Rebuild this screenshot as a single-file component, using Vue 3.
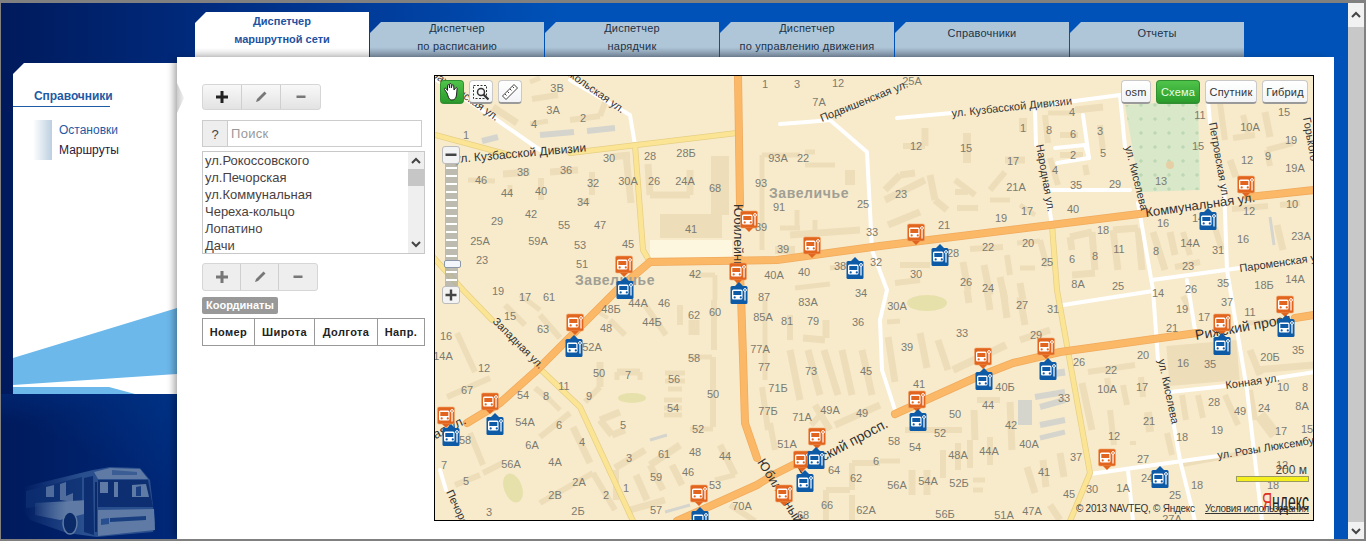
<script setup>
const tabs = [
  { lines: ['Диспетчер', 'маршрутной сети'], active: true },
  { lines: ['Диспетчер', 'по расписанию'] },
  { lines: ['Диспетчер', 'нарядчик'] },
  { lines: ['Диспетчер', 'по управлению движения'] },
  { lines: ['Справочники'] },
  { lines: ['Отчеты'] }
]

const routes = ['ул.Рокоссовского', 'ул.Печорская', 'ул.Коммунальная', 'Череха-кольцо', 'Лопатино', 'Дачи']
const columns = ['Номер', 'Широта', 'Долгота', 'Напр.']
const mapTypes = ['osm', 'Схема', 'Спутник', 'Гибрид']
const sliderDashes = 15

// coordinates below are screen pixels, the svg viewBox starts at the map corner
// roads stop where a street name is written over them, same as on the tiles
const roads = {
  white: [
    '437,80 497,120 540,150', '570,80 630,115 635,145', '780,124 807,122 830,120 867,152 872,250 887,290 880,320 882,370 895,410',
    '897,118 952,113', '1052,104 1120,95', '1120,95 1125,147', '1138,203 1153,290 1158,360', '1172,415 1180,460 1195,521',
    '1208,100 1210,123', '1224,185 1227,270 1247,390 1262,521',
    '1035,110 1036,145', '1048,200 1052,225', '1048,190 1130,190', '1055,148 1085,145 1089,158 1057,163', '1083,115 1089,158',
    '1152,280 1240,268', '1063,305 1153,291', '1170,392 1226,386', '1270,379 1314,372', '1090,474 1218,456',
    '1187,280 1195,330', '1128,470 1133,521', '440,470 446,490'
  ],
  yellow: [
    '435,135 510,155', '570,153 737,133', '635,145 643,250 650,262',
    '434,258 463,290 492,320', '537,366 580,407 633,521', '1052,225 1057,290 1090,473 1070,521'
  ],
  orange: [
    '738,75 740,205', '739,258 741,295 743,357 745,423 757,458',
    '650,262 777,260 880,246 1147,213', '1248,197 1314,190',
    '650,262 617,290 537,370 500,403 467,423',
    '677,521 757,485 773,475 803,460', '895,414 977,377 1013,363 1060,352 1197,333', '1295,318 1314,315'
  ]
}

const strips = `532 99 558 95 6|570 120 600 116 6|600 116 606 100 6|530 124 548 121 5|493 107 517 123 7|530 82 540 78 5
503 174 530 172 7|550 172 578 170 7|468 180 495 181 5|510 185 510 195 5|541 178 541 200 6|592 172 592 195 6|578 202 590 201 6
610 157 630 155 7|626 155 631 203 7|648 164 650 195 7|650 195 690 195 7|690 195 690 170 7|720 156 720 215 18|660 226 722 226 24
762 155 762 250 5|762 155 800 155 5|805 152 815 152 5|805 165 835 165 5|850 170 850 185 10|780 228 800 228 5|797 210 797 228 5
775 250 795 250 8|790 235 860 230 7|815 220 815 232 5|690 275 715 275 5|715 275 715 300 5|795 288 830 284 5|830 268 848 266 5
645 305 666 335 6|680 305 680 325 6|694 320 694 335 11|714 300 714 350 6|610 320 625 335 6|598 312 608 318 4|600 362 600 387 7
600 387 585 402 6|617 372 640 372 7|617 372 617 380 5|640 372 640 380 5|665 373 685 373 5|665 381 685 381 5|668 389 682 389 5
664 400 682 400 5|664 408 682 408 5|664 415 682 415 5|688 357 712 357 5|713 357 713 427 6|690 429 713 429 5|600 420 620 412 7
600 420 612 435 7|612 435 625 430 7|535 388 550 400 6|550 400 560 410 5|447 397 490 378 6|457 333 475 372 6|540 315 560 338 6
505 305 525 325 6|520 295 540 310 5|540 437 570 413 6|470 433 483 465 6|483 473 503 463 6|455 485 480 475 6|573 427 590 463 7
540 503 593 473 6|593 473 615 510 6|615 468 645 450 7|616 470 616 500 6|650 465 680 445 7|650 465 663 490 7|672 465 682 485 7
636 475 647 500 7|720 445 735 475 7|735 475 715 480 5|730 505 755 521 6|630 510 665 500 7|765 300 765 380 5|762 387 768 430 6
770 423 775 450 6|790 315 790 340 6|803 338 825 340 7|826 320 826 338 7|790 350 800 400 7|808 350 820 395 7|824 350 838 395 7
842 350 852 395 7|862 350 872 395 7|811 425 825 410 6|815 405 830 430 7|835 425 880 405 7|852 463 880 463 6|852 463 852 490 6
826 490 850 490 6|826 490 826 521 6|852 495 852 521 6|888 337 895 382 7|920 333 927 368 7|938 340 948 370 7|953 370 1006 345 8
1020 340 1050 330 7|967 290 969 303 7|987 290 990 310 7|1003 290 1007 318 7|1020 297 1025 325 7|887 322 900 321 5|977 400 1000 400 6
974 410 975 440 7|1010 402 1012 450 7|905 430 962 430 6|880 461 900 461 5|943 450 943 478 6|958 443 958 470 6|970 440 970 468 6
990 437 990 465 6|912 470 912 495 7|927 470 927 495 7|973 480 985 480 5|973 490 983 490 5|1027 467 1035 493 7|1043 460 1046 487 7
1060 453 1064 477 7|1050 505 1060 520 7|1082 383 1092 430 7|1088 372 1135 365 6|1107 378 1110 393 6|1123 385 1127 405 6
1110 410 1114 445 6|1130 443 1136 443 4|1148 412 1150 432 8|1141 377 1143 397 6|1167 433 1172 455 6|1168 366 1238 360 40
1182 395 1186 420 6|1198 395 1203 418 6|1225 395 1238 425 6|1250 390 1255 420 6|1180 465 1260 450 5|1260 415 1275 435 12
1250 350 1260 375 7|1255 370 1314 365 7|1247 323 1295 320 5|1183 296 1190 310 6|903 146 925 146 6|925 146 925 128 7|967 133 967 163 8
885 190 900 175 7|900 175 915 173 7|885 200 925 180 7|888 225 920 212 7|930 175 935 200 7|935 200 947 210 7|955 180 975 195 6
955 192 968 192 6|957 208 978 208 6|990 190 1005 172 6|990 200 1010 200 5|1005 160 1025 160 7|1023 118 1023 132 8|1045 115 1048 143 6
1050 158 1058 185 6|1048 113 1075 113 5|1075 110 1103 107 7|1060 135 1078 135 6|1100 125 1103 150 6|1085 165 1087 175 6
1060 155 1083 155 6|1020 205 1035 215 5|900 265 930 265 6|895 283 920 280 6|963 262 968 290 7|984 265 990 295 7|1007 255 1010 275 6
1020 268 1035 268 5|1000 277 1005 300 7|1020 283 1023 300 7|970 249 1003 247 6|1017 243 1040 241 5|1040 240 1047 267 6
1070 237 1092 232 7|1070 237 1072 250 7|1092 232 1095 270 7|1072 275 1095 273 7|1113 230 1138 228 7|1113 230 1118 270 7
1138 228 1142 270 7|1153 232 1165 270 7|1170 232 1175 255 7|1183 232 1190 255 6|1215 228 1222 250 6|1175 267 1200 262 6
1277 225 1283 250 7|1232 209 1268 206 6|1280 205 1300 203 6|1220 103 1225 140 6|1243 115 1248 133 6|1233 138 1255 135 6
1265 112 1270 137 7|1267 150 1293 143 6|1267 150 1270 166 6|1230 160 1236 177 7`

const grayStrips = `540 135 574 132 6|587 131 615 128 6|482 141 498 137 6|1025 400 1025 425 14|1035 397 1065 392 6|1040 407 1065 400 6
1040 425 1065 420 6|1040 438 1065 432 5|1045 375 1065 372 7|650 440 667 435 3|665 512 690 505 3|1270 217 1274 245 3`

const numbers = `557 88 3В|553 110 3А|583 118 2|534 124 4|466 135 1|523 172 38|566 170 36|481 180 46|507 193 44|541 191 40|593 183 32|583 202 34
609 158 30|650 156 28|686 153 28Б|628 181 30А|654 181 26|685 181 24А|715 188 68|778 158 93А|803 158 22|761 183 93|779 207 91|863 204 25
761 227 89|872 232 33|783 249 39|691 229 41|531 214 42|497 221 29|564 225 55|600 225 47|480 241 25А|538 241 59А|580 245 53|628 244 45
582 264 51|482 260 23|498 291 19|525 297 17|549 297 61|765 84 1|797 84 3|838 83 12|819 102 7А|695 274 42|774 275 40А|804 272 40
840 266 38|876 262 32|861 293 34|764 297 87|808 302 83А|510 316 15|543 329 63|446 336 16|443 356 14А|638 303 44А|664 303 46|694 315 62
715 312 60|763 317 85А|787 321 81|813 321 79|858 322 36|611 309 48Б|606 328 48|652 322 44Б|592 347 52А|760 349 77А|764 367 77|811 371 73
866 371 45|694 358 58|484 368 12|599 373 50|628 375 7|674 379 56|564 386 11|589 396 9|713 394 50|467 390 67|523 395 54|546 396 8
673 408 54|778 388 71Б|768 411 77Б|802 417 71А|830 410 49А|862 413 49|525 422 54А|559 425 6|623 425 5|698 429 52|465 440 58|532 445 6А
582 442 4|787 444 51А|664 454 61|695 452 48|725 456 44|629 458 3|511 464 56А|555 462 4А|444 465 7|656 477 59|688 472 46|834 470 64
856 478 62|466 481 5|579 482 2А|715 485 53|626 488 1|555 495 2В|606 495 2|489 512 3|578 511 2Б|656 510 57|742 506 70А|827 505 66
866 510 62А|803 515 68|876 461 6|912 81 25А|916 146 12|966 148 15|1013 161 17|1023 128 1|1072 112 4|1049 130 8|1073 134 6|1100 131 3
1073 155 2|1103 153 5|1055 170 4|1076 185 35|1115 184 29|1016 187 21А|901 194 23|1027 211 17|1073 209 40|1001 218 19|944 225 21
1028 243 20|988 247 22|1103 230 18|1163 223 16|1198 218 14|1249 211 12|1292 204 10|1161 181 13|1200 115 11|1198 146 15|1250 127 10А
1284 112 15|1291 140 19|1247 160 12|1268 156 9|1295 168 19А|1190 243 14А|1243 239 16|1301 236 23А|1156 251 8|1218 250 31|1119 249 11
1095 256 8|1072 259 6|1047 262 25|953 253 28|916 274 30|966 282 26|988 288 24|1078 284 8А|1118 286 25|1188 266 23|1158 293 14
1191 289 26|1223 283 35|1264 285 18Б|1295 279 14А|897 306 30А|1022 305 27|1053 309 31|1182 309 19|1204 317 17|1227 302 37|1250 312 11
1172 328 21|962 333 33|1036 335 29|907 347 39|1143 355 20|1183 363 16|1210 364 35|1079 362 26|1111 370 22|1270 357 20Б|1298 350 35
919 384 41|1005 387 40Б|1107 389 10А|1142 387 17|1064 398 33|1283 387 10|1305 387 8|988 405 44|1214 402 28|1240 411 49|1264 408 24
1302 406 8А|955 414 50|1149 421 21|1011 425 42|940 433 52|1217 430 19|1281 431 17|1307 429 15|1114 436 12|1182 437 18|894 441 58
915 447 54|1029 444 40А|989 451 44А|958 455 48А|1076 457 37|1143 459 27|1044 472 41|1282 465 12|1147 478 24|1092 489 30|1123 488 1А
1197 485 18|1273 485 18|897 485 56А|928 481 54А|959 483 52Б|1069 494 45|1175 495 25|945 514 56Б|1004 515 51А|1032 511 47А|1172 519 27А`

const streets = [
  { x: 455, y: 163, angle: -5, text: 'ул. Кузбасской Дивизии', size: 12 },
  { x: 734, y: 204, angle: 90, text: 'Юбилейный', size: 13 },
  { x: 757, y: 462, angle: 58, text: 'Юбилейный', size: 13 },
  { x: 1146, y: 217, angle: -8, text: 'Коммунальная ул.', size: 13 },
  { x: 1196, y: 340, angle: -10, text: 'Рижский просп.', size: 14 },
  { x: 800, y: 474, angle: -28, text: 'Рижский просп.', size: 14 },
  { x: 492, y: 322, angle: 45, text: 'Западная ул.', size: 11 },
  { x: 822, y: 122, angle: -22, text: 'Подвишенская ул.', size: 11 },
  { x: 558, y: 69, angle: 35, text: 'Никольская ул.', size: 11 },
  { x: 427, y: 73, angle: 35, text: 'Гражданская ул.', size: 11 },
  { x: 952, y: 117, angle: -6, text: 'ул. Кузбасской Дивизии', size: 11 },
  { x: 1036, y: 145, angle: 80, text: 'Народная ул.', size: 11 },
  { x: 1125, y: 147, angle: 76, text: 'ул. Киселева', size: 11 },
  { x: 1209, y: 123, angle: 80, text: 'Петровская ул.', size: 11 },
  { x: 1303, y: 118, angle: 80, text: 'Горького', size: 11 },
  { x: 1240, y: 272, angle: -8, text: 'Пароменская ул.', size: 11 },
  { x: 1158, y: 360, angle: 78, text: 'ул. Киселева', size: 11 },
  { x: 1226, y: 389, angle: -8, text: 'Конная ул.', size: 11 },
  { x: 1218, y: 459, angle: -9, text: 'ул. Розы Люксембург', size: 11 },
  { x: 446, y: 492, angle: 65, text: 'Печорская', size: 11 },
  { x: 375, y: 470, angle: -27, text: 'Рокоссовская ул.', size: 13 }
]

const orangePins = [
  [749, 220], [812, 246], [916, 233], [624, 265], [738, 272], [575, 323], [490, 402], [446, 416], [983, 357], [1046, 347],
  [917, 400], [817, 437], [802, 460], [784, 494], [699, 494], [1107, 458], [1246, 185], [1222, 323], [1285, 305]
]
const bluePins = [
  [940, 257], [855, 270], [625, 290], [739, 295], [574, 348], [495, 426], [451, 437], [984, 381], [1048, 371], [918, 422],
  [816, 460], [805, 483], [700, 520], [1160, 479], [1208, 221], [1222, 346], [1286, 328]
]

const rows = (src) => src.split(/[|\n]/).map((r) => r.trim().split(' '))
const stripRows = rows(strips)
const grayRows = rows(grayStrips)
const numberRows = rows(numbers)
</script>

<template>
  <div class="window">
    <div class="page">
      <nav class="tabs">
        <div
          v-for="tab in tabs"
          :key="tab.lines.join()"
          class="tab"
          :class="{ active: tab.active, single: tab.lines.length === 1 }"
        >
          <span v-for="line in tab.lines" :key="line">{{ line }}</span>
        </div>
      </nav>

      <div class="body">
        <aside class="side">
          <div class="side-panel">
            <svg class="side-art" viewBox="0 0 164 331">
              <polygon points="0,295 164,245 164,311 0,322" fill="#6cb8ea" />
              <polygon points="0,324 96,324 122,331 0,331" fill="#6cb8ea" />
            </svg>
            <h2 class="side-title">Справочники</h2>
            <ul class="side-menu">
              <li class="current">Остановки</li>
              <li>Маршруты</li>
            </ul>
          </div>
          <div class="bus-area">
            <svg class="bus" viewBox="0 0 160 82">
              <defs>
                <linearGradient id="bus-side">
                  <stop offset="0" stop-color="#2a4f8e" stop-opacity="0" />
                  <stop offset=".45" stop-color="#2a4f8e" />
                </linearGradient>
                <linearGradient id="bus-light">
                  <stop offset="0" stop-color="#5f7ba5" stop-opacity=".15" />
                  <stop offset=".6" stop-color="#5f7ba5" />
                </linearGradient>
              </defs>
              <polygon points="13,27 83,10 100,7 130,8 140,20 145,63 143,72 87,77 57,73 20,60 13,50" fill="url(#bus-side)" />
              <polygon points="84,12 100,8 130,9 138,19 88,19" fill="#5f7ba5" />
              <polygon points="102,10 127,12 127,15 102,15" fill="#3a5d95" />
              <polygon points="88,20 138,20 143,47 88,47" fill="#0d2f72" />
              <polygon points="90,22 98,22 98,33 90,33" fill="#5f7ba5" />
              <polygon points="104,22 108,22 108,37 104,37" fill="#5f7ba5" />
              <polygon points="122,25 136,24 139,37 122,37" fill="#5f7ba5" />
              <polygon points="126,27 131,26 131,36 126,36" fill="#1a3f80" />
              <polygon points="16,31 72,17 72,42 16,48" fill="#0d2f72" opacity=".8" />
              <polygon points="36,27 44,25 44,37 36,37" fill="#4f6c9c" />
              <polygon points="50,24 56,22 56,36 63,33 63,42 50,40" fill="#4f6c9c" />
              <polygon points="25,43 78,40 78,53 50,60 25,55" fill="url(#bus-light)" />
              <polygon points="74,18 83,16 84,75 74,72" fill="#0d2f72" />
              <polygon points="88,50 144,49 145,70 88,76" fill="#5f7ba5" />
              <polygon points="100,58 136,56 136,60 100,62" fill="#1a3f80" />
              <polygon points="91,59 99,58 99,64 91,65" fill="#274e8f" />
              <ellipse cx="60" cy="63" rx="7" ry="11" fill="#0b2a68" stroke="#5f7ba5" stroke-width="1.500" />
              <line x1="86" y1="22" x2="86" y2="72" stroke="#0b2a68" stroke-width="2" />
            </svg>
          </div>
        </aside>

        <main class="content">
          <span class="panel-tip"></span>
          <section class="form">
            <div class="toolbar">
              <button class="tool dark">
                <svg viewBox="0 0 14 14"><path d="M5.500 1h3v4.500H13v3H8.500V13h-3V8.500H1v-3h4.500z" /></svg>
              </button>
              <button class="tool">
                <svg viewBox="0 0 14 14"><path d="M10.500 1.500l2 2-7.500 7.500-3 1 1-3z" /></svg>
              </button>
              <button class="tool">
                <svg viewBox="0 0 14 14"><path d="M2.500 5.500h9v2.500h-9z" /></svg>
              </button>
            </div>

            <div class="search">
              <span class="search-help">?</span>
              <input class="search-input" placeholder="Поиск" />
            </div>

            <div class="list">
              <ul>
                <li v-for="route in routes" :key="route">{{ route }}</li>
              </ul>
              <div class="list-scroll">
                <svg viewBox="0 0 16 12"><path d="M4 8l4-4 4 4" /></svg>
                <span class="list-thumb"></span>
                <svg class="bottom" viewBox="0 0 16 12"><path d="M4 4l4 4 4-4" /></svg>
              </div>
            </div>

            <div class="toolbar second">
              <button class="tool">
                <svg viewBox="0 0 14 14"><path d="M5.500 1h3v4.500H13v3H8.500V13h-3V8.500H1v-3h4.500z" /></svg>
              </button>
              <button class="tool">
                <svg viewBox="0 0 14 14"><path d="M10.500 1.500l2 2-7.500 7.500-3 1 1-3z" /></svg>
              </button>
              <button class="tool">
                <svg viewBox="0 0 14 14"><path d="M2.500 5.500h9v2.500h-9z" /></svg>
              </button>
            </div>

            <span class="chip">Координаты</span>

            <table class="coords">
              <thead>
                <tr>
                  <th v-for="col in columns" :key="col">{{ col }}</th>
                </tr>
              </thead>
            </table>
          </section>

          <section class="map">
            <svg class="map-canvas" viewBox="435 76 878 444">
              <defs>
                <pattern id="park" width="14" height="14" patternUnits="userSpaceOnUse">
                  <path d="M7 5v4M5 7h4" stroke="#b5d3ae" stroke-width="1" />
                </pattern>
                <g id="bus-mark">
                  <rect x="-7" y="-5.500" width="10.500" height="10" rx="1.500" fill="#fff" />
                  <rect x="-5.700" y="-4" width="8" height="4" fill="currentColor" />
                  <circle cx="-4.300" cy="2.400" r="1.100" fill="currentColor" />
                  <circle cx="1.800" cy="2.400" r="1.100" fill="currentColor" />
                  <path d="M6 -3.500V5.500" stroke="#fff" stroke-width="1.200" />
                  <circle cx="6" cy="-5" r="1.400" fill="none" stroke="#fff" stroke-width="1" />
                </g>
                <g id="pin-orange" color="#e2651f">
                  <rect x="-8.500" y="-9" width="17" height="17" rx="1.500" fill="#e2651f" stroke="#f2a468" stroke-width="0.600" />
                  <path d="M-4 8h8l-4 4z" fill="#e2651f" />
                  <use href="#bus-mark" />
                </g>
                <g id="pin-blue" color="#0d5aa7">
                  <rect x="-8.500" y="-9" width="17" height="18" rx="1.500" fill="#0d5aa7" />
                  <path d="M-4 -9h8l-4 -4z" fill="#0d5aa7" />
                  <use href="#bus-mark" />
                </g>
              </defs>

              <rect x="434" y="75" width="880" height="446" fill="#f8ebcc" />
              <polygon points="1125,105 1198,100 1200,190 1140,192" fill="#d9e8c9" />
              <polygon points="1125,105 1198,100 1200,190 1140,192" fill="url(#park)" />
              <circle cx="1170" cy="165" r="4" fill="#e6cfa5" />
              <rect x="650" y="240" width="82" height="17" fill="#fdf7df" />
              <ellipse cx="632" cy="398" rx="14" ry="5" fill="#e6e0ab" />
              <ellipse cx="513" cy="488" rx="9" ry="15" transform="rotate(-20 513 488)" fill="#e6e0ab" />
              <ellipse cx="927" cy="303" rx="20" ry="8" fill="#e6e0ab" />

              <line
                v-for="(s, i) in stripRows"
                :key="'s' + i"
                :x1="s[0]" :y1="s[1]" :x2="s[2]" :y2="s[3]" :stroke-width="s[4]"
                stroke="#eeddb9"
              />
              <line
                v-for="(s, i) in grayRows"
                :key="'g' + i"
                :x1="s[0]" :y1="s[1]" :x2="s[2]" :y2="s[3]" :stroke-width="s[4]"
                stroke="#d5d5cd"
              />

              <polyline v-for="r in roads.white" :key="r" :points="r" class="road" stroke="#fff" stroke-width="4" />
              <polyline v-for="r in roads.yellow" :key="r" :points="r" class="road" stroke="#e6cf86" stroke-width="6" />
              <polyline v-for="r in roads.yellow" :key="r + 'f'" :points="r" class="road" stroke="#fbe594" stroke-width="4.500" />
              <polyline v-for="r in roads.orange" :key="r" :points="r" class="road" stroke="#f0ab5e" stroke-width="8" />
              <polyline v-for="r in roads.orange" :key="r + 'f'" :points="r" class="road" stroke="#fbb866" stroke-width="6.500" />

              <text
                v-for="(n, i) in numberRows"
                :key="'n' + i"
                :x="n[0]" :y="n[1]"
                class="house"
              >{{ n[2] }}</text>

              <text x="615" y="285" class="district">Завеличье</text>
              <text x="809" y="198" class="district">Завеличье</text>

              <text
                v-for="st in streets"
                :key="st.x + st.text"
                :transform="`translate(${st.x} ${st.y}) rotate(${st.angle})`"
                :font-size="st.size"
                class="street"
              >{{ st.text }}</text>

              <use v-for="p in orangePins" :key="'o' + p" href="#pin-orange" :x="p[0]" :y="p[1]" />
              <use v-for="p in bluePins" :key="'b' + p" href="#pin-blue" :x="p[0]" :y="p[1]" />

              <text x="1307" y="474" class="scale" text-anchor="end">200 м</text>
              <rect x="1236.500" y="476.500" width="72" height="5" fill="#f5ee1e" stroke="#9a9a60" />
              <text x="1262" y="510" class="yandex" textLength="47" lengthAdjust="spacingAndGlyphs"><tspan fill="#e0301e">Я</tspan>ндекс</text>
              <text x="1076" y="512" class="copy" textLength="119">© 2013 NAVTEQ, © Яндекс</text>
              <text x="1205" y="512" class="copy terms" textLength="104">Условия использования</text>
            </svg>

            <div class="map-tools">
              <button class="map-btn icon on">
                <svg viewBox="0 0 20 20" fill="#fff" stroke="#222" stroke-width="1">
                  <path d="M5 11L2.500 7.500c-.600-1 .800-1.800 1.500-1l1.500 2V3.500c0-1.200 1.600-1.200 1.700 0l.3 2.500V2.500c0-1.200 1.800-1.200 1.800 0V6l.7-2.500c.200-1.200 1.800-1 1.700.200L12 8l1.500-2c.500-1 2-.4 1.600.700L14.500 13c-.400 3-1.500 5-4.500 5s-3.500-2.500-5-7z" />
                </svg>
              </button>
              <button class="map-btn icon">
                <svg viewBox="0 0 20 20" fill="none" stroke="#333">
                  <rect x="2.500" y="3.500" width="13" height="13" stroke-dasharray="2 1.500" />
                  <circle cx="10" cy="10" r="3.500" stroke-width="1.500" />
                  <path d="M12.500 12.500l5 5" stroke-width="2.200" />
                </svg>
              </button>
              <button class="map-btn icon">
                <svg viewBox="0 0 20 20" fill="#fff" stroke="#444">
                  <path d="M2.500 14L14 2.500l3.500 3.500L6 17.500z" />
                  <path d="M5 12l1.500 1.500M7.500 9.500L9 11M10 7l1.500 1.500M12.500 4.500L14 6" />
                </svg>
              </button>
            </div>

            <div class="map-types">
              <button
                v-for="type in mapTypes"
                :key="type"
                class="map-btn"
                :class="{ on: type === 'Схема' }"
              >{{ type }}</button>
            </div>

            <div class="zoom">
              <button class="zoom-btn"><svg viewBox="0 0 14 14"><path d="M1.500 5.500h11v2.500h-11z" /></svg></button>
              <div class="zoom-track">
                <span v-for="i in sliderDashes" :key="i" class="zoom-dash"></span>
                <span class="zoom-handle"></span>
              </div>
              <button class="zoom-btn"><svg viewBox="0 0 14 14"><path d="M5.800 1.500h2.400v4.300h4.300v2.400H8.200v4.300H5.800V8.200H1.500V5.800h4.300z" /></svg></button>
            </div>
          </section>
        </main>
      </div>
    </div>

    <div class="page-scroll">
      <span class="scroll-btn"><svg viewBox="0 0 16 16"><path d="M4 10l4-4 4 4" /></svg></span>
      <span class="scroll-track"></span>
      <span class="scroll-btn low"><svg viewBox="0 0 16 16"><path d="M4 6l4 4 4-4" /></svg></span>
    </div>
  </div>
</template>

<style>
html, body { margin: 0; background: #fff; overflow: hidden; }
</style>

<style scoped>
.window {
  width: 1366px;
  height: 541px;
  box-sizing: border-box;
  display: flex;
  border: solid #808080;
  border-width: 3px 2px 2px 1px;
  font-family: "Liberation Sans", Arial, sans-serif;
  background: #fff;
  overflow: hidden;
}
.page {
  width: 1347px;
  display: flex;
  flex-direction: column;
  background: linear-gradient(90deg, #001a5c 0, #00297a 180px, #003f9f 400px, #0052b8 560px);
}

/* tabs */
.tabs {
  display: flex;
  align-items: flex-end;
  gap: 1px;
  height: 54px;
  padding-left: 194px;
  flex: none;
}
.tab {
  width: 174px;
  height: 35px;
  box-sizing: border-box;
  padding-bottom: 5px;
  display: flex;
  flex-direction: column;
  justify-content: center;
  align-items: center;
  font-size: 11px;
  line-height: 18px;
  letter-spacing: .2px;
  color: #1d3347;
  background: linear-gradient(#afc6d9 0, #afc6d9 72%, #76889a 100%);
  clip-path: polygon(11px 0, 100% 0, 100% 100%, 0 100%, 0 11px);
}
.tab.single { padding-bottom: 13px; }
.tab.active {
  height: 45px;
  padding-bottom: 9px;
  font-weight: bold;
  letter-spacing: 0;
  color: #22529f;
  background: linear-gradient(#fff 0, #fff 80%, #d8d8d8 100%);
}

.body {
  flex: 1;
  display: flex;
  min-height: 0;
}

/* left side */
.side {
  width: 176px;
  flex: none;
  display: flex;
  flex-direction: column;
  padding-top: 6px;
}
.side-panel {
  position: relative;
  height: 331px;
  margin-left: 12px;
  flex: none;
  background: #fff;
  clip-path: polygon(11px 0, 100% 0, 100% 100%, 0 100%, 0 11px);
}
.side-art {
  position: absolute;
  left: 0;
  top: 0;
  width: 164px;
  height: 331px;
}
.side-title {
  position: relative;
  margin: 26px 0 0;
  width: 97px;
  box-sizing: border-box;
  padding: 0 0 2px 21px;
  font-size: 12px;
  line-height: 15px;
  font-weight: bold;
  letter-spacing: -.05px;
  color: #1f5aa5;
  border-bottom: 1px solid #1f5aa5;
  white-space: nowrap;
}
.side-menu {
  list-style: none;
  margin: 13px 0 0 20px;
  padding: 0 0 0 26px;
  font-size: 12px;
  line-height: 20px;
  color: #2a1a3a;
  position: relative;
  background: linear-gradient(90deg, #fff 0, #bccfe0 19px, #fff 19px) no-repeat;
}
.side-menu li { height: 20px; }
.side-menu .current { color: #1f5aa5; }
.bus-area {
  flex: 1;
  padding: 66px 0 0 9px;
  background:
    linear-gradient(170deg, rgba(0, 50, 140, .3) 0, rgba(0, 50, 140, 0) 18%),
    linear-gradient(205deg, rgba(0, 70, 160, .32) 0, rgba(0, 60, 150, 0) 45%);
  overflow: hidden;
}
.bus {
  display: block;
  width: 160px;
  height: 82px;
}

/* main panel */
.content {
  position: relative;
  width: 1157px;
  flex: none;
  box-sizing: border-box;
  padding: 18px 0 0 25px;
  display: flex;
  gap: 9px;
  align-items: flex-start;
  background: #fff;
  box-shadow: -5px 0 7px -2px rgba(0, 0, 0, .35);
}
.panel-tip {
  position: absolute;
  left: 0;
  top: 26px;
  width: 7px;
  height: 30px;
  background: linear-gradient(90deg, #ccc, #f2f2f2);
  clip-path: polygon(0 0, 100% 50%, 0 100%);
}
.form {
  width: 223px;
  flex: none;
  padding-top: 9px;
  display: flex;
  flex-direction: column;
  align-items: flex-start;
}
.toolbar {
  display: flex;
  height: 26px;
  border: 1px solid #d6d6d6;
  border-radius: 3px;
  box-sizing: border-box;
  background: linear-gradient(#f8f8f8, #e3e3e3);
}
.toolbar.second {
  margin-top: 9px;
  height: 28px;
  background: #eeeeee;
}
.tool {
  width: 39px;
  padding: 0;
  border: 0;
  border-right: 1px solid #cfcfcf;
  background: none;
  display: flex;
  align-items: center;
  justify-content: center;
}
.toolbar.second .tool { width: 38px; }
.tool:last-child { border-right: 0; }
.tool svg { width: 14px; height: 14px; fill: #777; }
.tool.dark svg { fill: #222; }
.search {
  margin-top: 10px;
  display: flex;
  width: 220px;
  height: 27px;
  box-sizing: border-box;
  border: 1px solid #ccc;
}
.search-help {
  width: 24px;
  flex: none;
  background: #eee;
  border-right: 1px solid #ccc;
  color: #444;
  font-size: 13px;
  line-height: 27px;
  text-align: center;
}
.search-input {
  flex: 1;
  min-width: 0;
  border: 0;
  padding: 0 3px;
  outline: 0;
  font: 13px "Liberation Sans", Arial, sans-serif;
  letter-spacing: .3px;
}
.search-input::placeholder { color: #999; opacity: 1; }
.list {
  margin-top: 4px;
  display: flex;
  width: 223px;
  height: 103px;
  box-sizing: border-box;
  border: 1px solid #c8c8c8;
}
.list ul {
  flex: 1;
  margin: 0;
  padding: 0 0 0 2px;
  list-style: none;
  overflow: hidden;
  color: #4a3f3f;
  font-size: 13px;
  line-height: 17px;
}
.list-scroll {
  position: relative;
  width: 16px;
  flex: none;
  background: #efefef;
}
.list-scroll svg {
  display: block;
  width: 16px;
  height: 12px;
  margin-top: 3px;
  fill: none;
  stroke: #444;
  stroke-width: 2;
}
.list-scroll svg.bottom {
  position: absolute;
  bottom: 3px;
}
.list-thumb {
  display: block;
  height: 17px;
  margin-top: 2px;
  background: #c6c6c6;
}
.chip {
  margin-top: 6px;
  padding: 0 4px;
  height: 17px;
  border-radius: 2px;
  background: #999;
  color: #fff;
  font-size: 11px;
  line-height: 17px;
  font-weight: bold;
}
.coords {
  margin-top: 4px;
  width: 223px;
  height: 28px;
  border-collapse: collapse;
  table-layout: fixed;
}
.coords th {
  border: 1px solid #999;
  padding: 0;
  font-size: 11px;
  letter-spacing: .4px;
  color: #222;
}
.coords th:nth-child(1) { width: 51px; }
.coords th:nth-child(2) { width: 59px; }
.coords th:nth-child(3) { width: 62px; }

/* map */
.map {
  position: relative;
  width: 880px;
  height: 446px;
  box-sizing: border-box;
  flex: none;
  border: 1px solid #000;
  overflow: hidden;
}
.map-canvas {
  display: block;
  width: 878px;
  height: 444px;
}
.road {
  fill: none;
  stroke-linejoin: round;
  stroke-linecap: round;
}
.house {
  font-size: 11px;
  fill: #7c7b70;
  text-anchor: middle;
  dominant-baseline: central;
}
.district {
  font-size: 14px;
  font-weight: bold;
  letter-spacing: .6px;
  fill: #a09f94;
  text-anchor: middle;
}
.street { fill: #333; }
.scale { font-size: 12px; fill: #444; }
.yandex { font-size: 24px; fill: #222; }
.copy { font-size: 10px; fill: #333; }
.terms { text-decoration: underline; }
.map-tools {
  position: absolute;
  left: 5px;
  top: 4px;
  display: flex;
  gap: 5px;
}
.map-types {
  position: absolute;
  right: 5px;
  top: 4px;
  display: flex;
  gap: 5px;
}
.map-btn {
  height: 24px;
  padding: 0;
  border: 1px solid #c9c9c9;
  border-bottom: 2px solid #9a9a9a;
  border-radius: 4px;
  background: linear-gradient(#fff, #f2f4f6);
  color: #333;
  font: 11px "Liberation Sans", Arial, sans-serif;
  letter-spacing: .2px;
}
.map-types .map-btn:nth-child(1) { width: 30px; }
.map-types .map-btn:nth-child(2) { width: 44px; }
.map-types .map-btn:nth-child(3) { width: 52px; }
.map-types .map-btn:nth-child(4) { width: 46px; }
.map-btn.on {
  background: linear-gradient(#4fc34a, #2a9d2b);
  color: #e9ffe6;
  border-color: #2f9030;
}
.map-btn.icon {
  width: 24px;
  padding: 1px;
  display: flex;
  align-items: center;
  justify-content: center;
}
.map-btn.icon svg { width: 20px; height: 20px; }
.zoom {
  position: absolute;
  left: 7px;
  top: 70px;
  width: 18px;
  display: flex;
  flex-direction: column;
  align-items: center;
}
.zoom-btn {
  width: 18px;
  height: 18px;
  padding: 1px;
  border: 1px solid #bbb;
  border-radius: 3px;
  background: #f3f3f3;
  display: flex;
  align-items: center;
  justify-content: center;
}
.zoom-btn svg { width: 14px; height: 14px; fill: #444; }
.zoom-track {
  position: relative;
  width: 13px;
  height: 122px;
  padding-top: 3px;
  box-sizing: border-box;
  background: rgba(170, 170, 165, .75);
  display: flex;
  flex-direction: column;
  gap: 6px;
  align-items: center;
}
.zoom-dash {
  width: 11px;
  height: 2px;
  flex: none;
  background: #fff;
}
.zoom-handle {
  position: absolute;
  left: -1px;
  top: 96px;
  width: 15px;
  height: 6px;
  border: 1px solid #8b98a8;
  border-radius: 2px;
  background: #f2f5fa;
}

/* page scrollbar */
.page-scroll {
  width: 16px;
  flex: none;
  display: flex;
  flex-direction: column;
  background: #f1f1f1;
}
.scroll-btn {
  height: 24px;
  flex: none;
  display: flex;
  align-items: center;
  justify-content: center;
}
.scroll-btn.low { height: 17px; }
.scroll-btn svg {
  width: 16px;
  height: 16px;
  fill: none;
  stroke: #444;
  stroke-width: 2;
}
.scroll-track {
  flex: 1;
  background: #c8c8c8;
}
</style>
